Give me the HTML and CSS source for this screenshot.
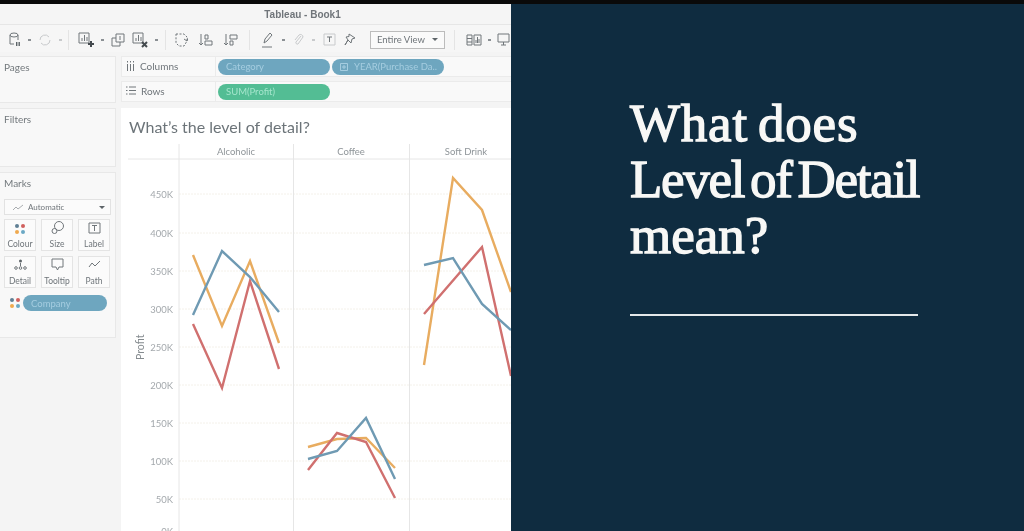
FILE: index.html
```html
<!DOCTYPE html>
<html lang="en">
<head>
    <meta charset="UTF-8">
    <meta name="viewport" content="width=device-width, initial-scale=1.0">
    <title>What does Level of Detail mean?</title>
    <link rel="stylesheet" href="styles.css">
</head>
<body>
    <div class="top-strip"></div>
    <div class="stage">
        <div class="tableau">
            <div class="titlebar">Tableau - Book1</div>
            <div class="toolbar">
                <div class="tool-group tool-group-data">
                    <svg width="12" height="16" viewBox="0 0 12 16"><ellipse cx="5" cy="3" rx="4" ry="2"/><path d="M1 3v9h4M9 3v5"/><path class="solid" d="M7 10h1.400v4H7zM9.500 10h1.400v4H9.500z"/></svg>
                    <span class="caret-dot"></span>
                    <svg class="dim" width="14" height="14" viewBox="0 0 14 14"><path d="M2 7a5 5 0 0 1 9-3M12 7a5 5 0 0 1-9 3"/></svg>
                    <span class="caret-dot dim"></span>
                </div>
                <div class="tool-group tool-group-sheet">
                    <svg width="16" height="16" viewBox="0 0 16 16"><path d="M1 1h10v10H1z"/><path d="M4 9V6M6.500 9V3M9 9V5"/><path class="thick" d="M13 9v6M10 12h6"/></svg>
                    <span class="caret-dot"></span>
                    <svg width="14" height="14" viewBox="0 0 14 14"><path d="M5 1h8v8H5z"/><path d="M1 5h4M1 5v8h8V9"/><path d="M9 3v4"/></svg>
                    <svg width="16" height="16" viewBox="0 0 16 16"><path d="M1 1h10v10H1z"/><path d="M4 9V6M6.500 9V3M9 9V5"/><path class="thick" d="M10 10l5 5M15 10l-5 5"/></svg>
                    <span class="caret-dot"></span>
                </div>
                <div class="tool-group tool-group-sort">
                    <svg width="13" height="14" viewBox="0 0 13 14"><path stroke-dasharray="2 1.500" d="M1 1h8l3 3v4l-3 5H4L1 10z"/><path d="M9 6l3 2 1-3"/></svg>
                    <svg width="15" height="14" viewBox="0 0 15 14"><path d="M3 1v11M1 10l2 2 2-2M7 2h3v4H7zM7 8h7v4H7z"/></svg>
                    <svg width="15" height="14" viewBox="0 0 15 14"><path d="M3 1v11M1 10l2 2 2-2M7 2h7v4H7zM7 8h3v4H7z"/></svg>
                </div>
                <div class="tool-group tool-group-marks">
                    <svg width="13" height="16" viewBox="0 0 13 16"><path d="M3 11l1-4 5-6 2 2-5 6zM1 15h10"/></svg>
                    <span class="caret-dot"></span>
                    <svg class="dim" width="11" height="14" viewBox="0 0 11 14"><path d="M8 3L3 9a1.500 1.500 0 0 0 2 2l5-7a2.500 2.500 0 0 0-4-2L2 7"/></svg>
                    <span class="caret-dot dim"></span>
                    <svg width="13" height="13" viewBox="0 0 13 13"><path class="dim" d="M1 1h11v11H1z"/><path d="M4 4h5M6.500 4v5"/></svg>
                    <svg width="12" height="14" viewBox="0 0 12 14"><path d="M5 1l6 4-3 1-1 4-3-3-3 5 3-5-2-3 3-.5z"/></svg>
                    <div class="fit-select">Entire View <span class="caret-down"></span></div>
                </div>
                <div class="tool-group tool-group-show">
                    <svg width="16" height="12" viewBox="0 0 16 12"><path d="M1 1h5v10H1zM1 4.500h5M1 8h5M8 1h7v10H8z"/><path d="M10 9V6M11.500 9V3M13 9V5"/></svg>
                    <span class="caret-dot"></span>
                    <svg width="13" height="13" viewBox="0 0 13 13"><path d="M1 1h11v8H1zM6.500 9v3M4 12h5"/></svg>
                </div>
            </div>
            <div class="workspace">
                <div class="sidebar">
                    <section class="card card-pages"><h3>Pages</h3></section>
                    <section class="card card-filters"><h3>Filters</h3></section>
                    <section class="card card-marks">
                        <h3>Marks</h3>
                        <div class="mark-type">
                            <svg width="12" height="7" viewBox="0 0 12 7"><path d="M1 6l3-3 2 2 5-4"/></svg>
                            <span class="mark-type-name">Automatic</span>
                            <span class="caret-down"></span>
                        </div>
                        <div class="mark-grid">
                            <div class="mark-btn">
                                <span class="color-dots"><i class="d-blue"></i><i class="d-red"></i><i class="d-orange"></i><i class="d-teal"></i></span>
                                Colour
                            </div>
                            <div class="mark-btn">
                                <svg width="13" height="13" viewBox="0 0 13 13"><circle cx="8" cy="5" r="4.500"/><circle cx="3.500" cy="10" r="2.500"/></svg>
                                Size
                            </div>
                            <div class="mark-btn">
                                <svg width="13" height="13" viewBox="0 0 13 13"><path d="M1 2h11v10H1zM4 4.500h5M6.500 4.500V10"/></svg>
                                Label
                            </div>
                            <div class="mark-btn">
                                <svg width="13" height="13" viewBox="0 0 13 13"><circle class="solid" cx="6.500" cy="3" r="1.500"/><path d="M6.500 5v3"/><circle cx="2" cy="10" r="1.300"/><circle cx="6.500" cy="10" r="1.300"/><circle cx="11" cy="10" r="1.300"/></svg>
                                Detail
                            </div>
                            <div class="mark-btn">
                                <svg width="13" height="13" viewBox="0 0 13 13"><path d="M1 1h11v8H8l-1.500 3L5 9H1z"/></svg>
                                Tooltip
                            </div>
                            <div class="mark-btn">
                                <svg width="13" height="13" viewBox="0 0 13 13"><path d="M1 9l3-4 3 3 5-5"/></svg>
                                Path
                            </div>
                        </div>
                        <div class="mark-field">
                            <span class="color-dots"><i class="d-blue"></i><i class="d-red"></i><i class="d-orange"></i><i class="d-teal"></i></span>
                            <span class="pill pill-blue pill-company">Company</span>
                        </div>
                    </section>
                </div>
                <div class="main">
                    <div class="shelf">
                        <div class="shelf-label">
                            <svg width="9" height="10" viewBox="0 0 9 10"><path d="M1.500 3v7M4.500 3v7M7.500 3v7M1.500 0v1.500M4.500 0v1.500M7.500 0v1.500"/></svg>
                            Columns
                        </div>
                        <span class="pill pill-blue pill-wide">Category</span>
                        <span class="pill pill-blue pill-wide">
                            <svg width="8" height="8" viewBox="0 0 8 8"><path d="M.5.500h7v7h-7zM2 4h4M4 2v4"/></svg>
                            YEAR(Purchase Da..
                        </span>
                    </div>
                    <div class="shelf">
                        <div class="shelf-label">
                            <svg width="10" height="9" viewBox="0 0 10 9"><path d="M3 1h7M3 4.500h7M3 8h7M0 1h1.500M0 4.500h1.500M0 8h1.500"/></svg>
                            Rows
                        </div>
                        <span class="pill pill-green pill-wide">SUM(Profit)</span>
                    </div>
                    <div class="viz">
                        <h2 class="viz-title">What’s the level of detail?</h2>
                        <svg class="chart" width="390" height="391" viewBox="121 140 390 391">
                            <g class="grid">
                                <path d="M179 194H511M179 233H511M179 271H511M179 309H511M179 347H511M179 385H511M179 423H511M179 461H511M179 499H511"/>
                            </g>
                            <g class="frame">
                                <path d="M128 159H511M179 144V531M293.500 144V531M409.500 144V531"/>
                            </g>
                            <g class="col-head">
                                <text x="236" y="155">Alcoholic</text>
                                <text x="351" y="155">Coffee</text>
                                <text x="466" y="155">Soft Drink</text>
                            </g>
                            <g class="tick">
                                <text x="173" y="198">450K</text>
                                <text x="173" y="237">400K</text>
                                <text x="173" y="275">350K</text>
                                <text x="173" y="313">300K</text>
                                <text x="173" y="351">250K</text>
                                <text x="173" y="389">200K</text>
                                <text x="173" y="427">150K</text>
                                <text x="173" y="465">100K</text>
                                <text x="173" y="503">50K</text>
                                <text x="173" y="535">0K</text>
                            </g>
                            <text class="axis-name" transform="translate(144 360) rotate(-90)">Profit</text>
                            <g class="series series-orange">
                                <polyline points="193,255 222,326 250,261 279,343"/>
                                <polyline points="308,447 337,439 366,438 395,468"/>
                                <polyline points="424,365 453,178 482,210 511,292"/>
                            </g>
                            <g class="series series-red">
                                <polyline points="193,324 222,388 250,281 279,369"/>
                                <polyline points="308,470 337,433 366,442 395,498"/>
                                <polyline points="424,314 482,247 511,376"/>
                            </g>
                            <g class="series series-blue">
                                <polyline points="193,315 222,251 250,277 279,312"/>
                                <polyline points="308,459 337,451 366,418 395,479"/>
                                <polyline points="424,265 453,258 482,304 511,330"/>
                            </g>
                        </svg>
                    </div>
                </div>
            </div>
        </div>
        <div class="slide">
            <h1 class="slide-title"><span class="title-first">What does</span><br><span class="title-second">Level of Detail</span><br>mean?</h1>
            <div class="slide-rule"></div>
        </div>
    </div>
</body>
</html>
```

FILE: styles.css
```css
body, html {
    height: 100%;
    margin: 0;
    overflow: hidden;
    background: #0a0a0a;
}

.top-strip {
    height: 4px;
    background: #0a0a0a;
}

.stage {
    display: flex;
    height: 527px;
}

/* tableau side */
.tableau {
    width: 511px;
    flex: none;
    display: flex;
    flex-direction: column;
    overflow: hidden;
    background: #f4f4f4;
    font-family: 'Lato', sans-serif;
    color: #6f757a;
    filter: blur(0.6px);
}

.tableau svg {
    flex: none;
    fill: none;
    stroke: #70767a;
    stroke-width: 1;
}

.tableau svg .solid {
    fill: #5d6468;
    stroke: none;
}

.tableau svg .thick {
    stroke: #444a4e;
    stroke-width: 2;
}

.titlebar {
    height: 21px;
    line-height: 21px;
    text-align: center;
    font-family: 'Liberation Sans', sans-serif;
    font-size: 10px;
    font-weight: 700;
    color: #70757a;
    background: #f5f5f5;
    padding-left: 94px;
    box-sizing: border-box;
    border-bottom: 1px solid #e6e6e6;
}

.toolbar {
    height: 27px;
    display: flex;
    flex: none;
    align-items: center;
    box-sizing: border-box;
    padding: 2px 0 0 9px;
    overflow: hidden;
    background: #f6f6f6;
}

.tool-group {
    display: flex;
    flex: none;
    align-items: center;
    height: 20px;
    box-sizing: border-box;
    border-right: 1px solid #e4e4e4;
}

.tool-group-data {
    width: 60px;
    gap: 7px;
}

.tool-group-sheet {
    width: 97px;
    padding-left: 9px;
    gap: 7px;
}

.tool-group-sort {
    width: 84px;
    padding-left: 9px;
    gap: 10px;
}

.tool-group-marks {
    width: 205px;
    padding-left: 11px;
    gap: 8px;
}

.tool-group-show {
    padding-left: 11px;
    gap: 6px;
    border-right: 0;
}

.tableau svg.dim, .tableau svg .dim {
    stroke: #c8cacc;
}

.caret-dot {
    width: 3px;
    height: 2px;
    background: #8b9094;
}

.caret-dot.dim {
    background: #c8cacc;
}

.fit-select {
    display: flex;
    align-items: center;
    justify-content: space-between;
    box-sizing: border-box;
    width: 75px;
    height: 18px;
    margin-left: 6px;
    padding: 0 6px;
    border: 1px solid #bcbcbc;
    background: #fafafa;
    font-size: 9.5px;
    white-space: nowrap;
}

.caret-down {
    width: 0;
    height: 0;
    border-left: 3px solid transparent;
    border-right: 3px solid transparent;
    border-top: 3px solid #5d6468;
}

.workspace {
    flex: 1;
    display: flex;
    min-height: 0;
    padding-top: 4px;
}

.sidebar {
    width: 116px;
    flex: none;
    display: flex;
    flex-direction: column;
    gap: 5px;
}

.card {
    box-sizing: border-box;
    border: 1px solid #e8e8e8;
    border-left: 0;
    background: #f8f8f8;
    padding: 0 4px;
}

.card h3 {
    margin: 0;
    font-size: 10px;
    font-weight: 400;
    line-height: 20px;
    color: #73797d;
}

.card-pages {
    height: 47px;
}

.card-filters {
    height: 59px;
}

.card-marks {
    height: 166px;
}

.mark-type {
    display: flex;
    align-items: center;
    gap: 4px;
    box-sizing: border-box;
    width: 107px;
    height: 16px;
    margin-top: 6px;
    padding: 0 5px 0 7px;
    border: 1px solid #e2e2e2;
    background: #fbfbfb;
    font-size: 8px;
}

.mark-type svg {
    stroke: #a9adb0;
}

.mark-type-name {
    flex: 1;
}

.mark-grid {
    display: grid;
    grid-template-columns: repeat(3, 32px);
    grid-auto-rows: 32px;
    gap: 5px;
    margin-top: 4px;
}

.mark-btn {
    display: flex;
    flex-direction: column;
    align-items: center;
    justify-content: flex-end;
    gap: 5px;
    box-sizing: border-box;
    padding-bottom: 1px;
    border: 1px solid #e4e4e4;
    background: #fbfbfb;
    font-size: 8.5px;
    line-height: 10px;
}

.color-dots {
    display: grid;
    grid-template-columns: 4px 4px;
    gap: 2px;
    flex: none;
}

.color-dots i {
    width: 4px;
    height: 4px;
    border-radius: 50%;
}

.d-blue { background: #5f7f94; }
.d-red { background: #d0605e; }
.d-orange { background: #efa94f; }
.d-teal { background: #6ba8c4; }

.mark-field {
    display: flex;
    align-items: center;
    gap: 3px;
    margin: 7px 0 0 6px;
}

.pill {
    display: flex;
    align-items: center;
    gap: 6px;
    box-sizing: border-box;
    height: 16px;
    padding: 0 8px;
    border-radius: 8px;
    font-size: 9.5px;
    white-space: nowrap;
    color: #a5cde0;
}

.pill svg {
    stroke: #a5cde0;
}

.pill-blue {
    background: #6ea6bf;
}

.pill-green {
    background: #53bd94;
    color: #a5e5cc;
}

.pill-wide {
    width: 112px;
}

.pill-company {
    width: 84px;
}

.main {
    flex: 1;
    min-width: 0;
    display: flex;
    flex-direction: column;
    padding-left: 5px;
}

.shelf {
    display: flex;
    flex: none;
    align-items: center;
    gap: 2px;
    height: 21px;
    margin-bottom: 4px;
    border: 1px solid #ebebeb;
    border-right: 0;
    box-sizing: border-box;
    background: #f9f9f9;
}

.shelf-label {
    display: flex;
    align-items: center;
    gap: 5px;
    box-sizing: border-box;
    width: 94px;
    height: 100%;
    padding: 0 0 2px 4px;
    border-right: 1px solid #ebebeb;
    font-size: 10px;
    color: #6f757a;
}

.viz {
    flex: 1;
    min-height: 0;
    margin-top: 2px;
    overflow: hidden;
    background: #fff;
}

.viz-title {
    margin: 0;
    padding: 9px 0 0 8px;
    height: 23px;
    font-size: 16px;
    line-height: 20px;
    font-weight: 400;
    color: #6c7479;
}

.tableau .chart {
    display: block;
    stroke: none;
}

.grid path {
    stroke: #f4f1ea;
    stroke-dasharray: 2 1;
}

.frame path {
    stroke: #e6e6e6;
}

.chart text {
    stroke: none;
    font-family: 'Lato', sans-serif;
}

.col-head text {
    fill: #8f9599;
    font-size: 9.5px;
    text-anchor: middle;
}

.tick text {
    fill: #a4a9ad;
    font-size: 9.5px;
    text-anchor: end;
}

.chart .axis-name {
    fill: #858b8f;
    font-size: 10.5px;
}

.series polyline {
    fill: none;
    stroke-width: 2.4;
}

.series-orange polyline { stroke: #e8ac60; }
.series-red polyline { stroke: #d0706f; }
.series-blue polyline { stroke: #6f9ab3; }

/* slide side */
.slide {
    flex: 1;
    box-sizing: border-box;
    padding: 91px 0 0 119px;
    background: #0f2c40;
}

.slide-title {
    margin: 0;
    width: 320px;
    font-family: 'Liberation Serif', serif;
    font-size: 53px;
    font-weight: 400;
    line-height: 56px;
    word-spacing: -4px;
    white-space: nowrap;
    color: #f8f8f6;
    -webkit-text-stroke: 1.3px #f8f8f6;
}

.title-first {
    letter-spacing: 0.8px;
}

.title-second {
    letter-spacing: -1.3px;
    word-spacing: -6px;
}

.slide-rule {
    width: 288px;
    height: 2px;
    margin-top: 51px;
    background: #e4e8ea;
}
```
